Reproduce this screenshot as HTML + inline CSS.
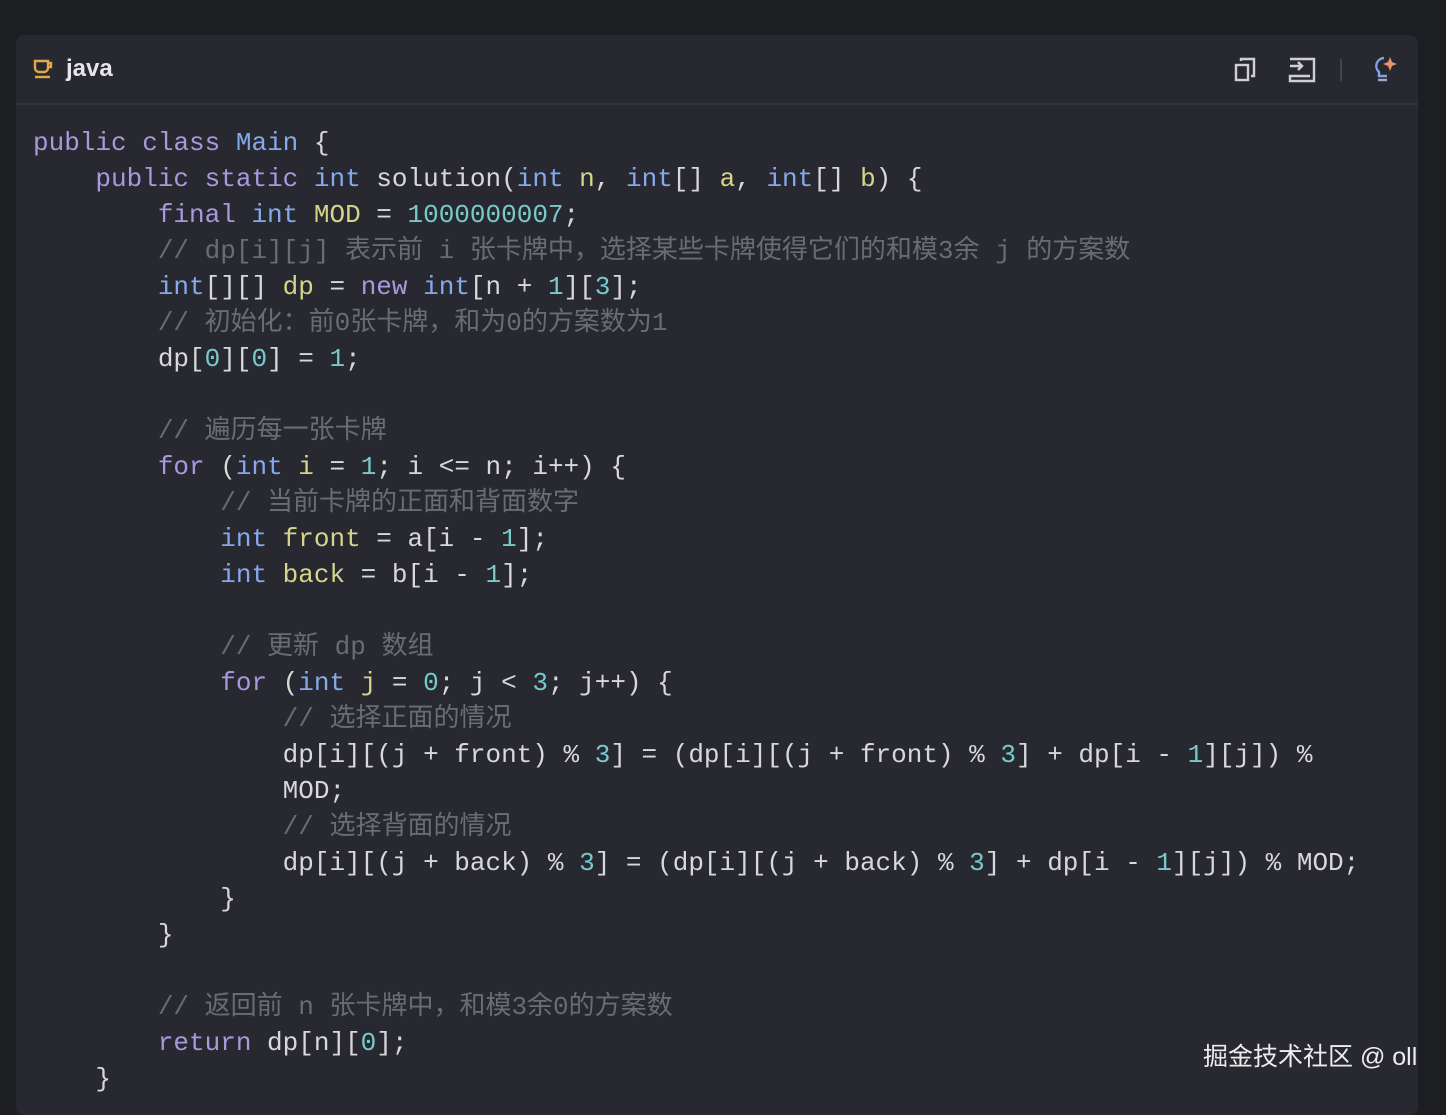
<!DOCTYPE html>
<html><head><meta charset="utf-8"><style>
html,body{margin:0;padding:0;background:#1d1e22;width:1446px;height:1096px;overflow:hidden}
.card{position:absolute;left:16px;top:35px;width:1402px;height:1080px;background:#282930;border-radius:8px}
.hdr{height:68px;border-bottom:2px solid #34353c;position:relative}
.lang{position:absolute;left:50px;top:20px;font:bold 24px "Liberation Sans",sans-serif;color:#e6e6ea}
pre{margin:0;position:absolute;left:33px;top:125px;font:26px/36px "Liberation Mono","Noto Sans CJK SC",monospace;color:#d8d8dc}
.k{color:#a898dc}.t{color:#84a9ec}.y{color:#d5d48a}.n{color:#78c9cc}.c{color:#6a6c73}
.wm{position:absolute;left:1203px;top:1037px;font:25px "Liberation Sans","Noto Sans CJK SC",sans-serif;color:#ececec}
</style></head><body>
<div class="card">
 <div class="hdr">
  <svg style="position:absolute;left:17px;top:23px" width="22" height="22" viewBox="0 0 22 22" fill="none" stroke="#e1a84a" stroke-width="2.4"><path d="M2 3h13v7a4 4 0 0 1-4 4H6a4 4 0 0 1-4-4z"/><path d="M15 5h3v4h-3"/><path d="M2 19h15"/></svg>
  <div class="lang">java</div>
  <svg style="position:absolute;left:1218px;top:22px" width="24" height="26" viewBox="0 0 24 26" fill="none" stroke="#cfcfd4" stroke-width="2.4"><rect x="2" y="8" width="12" height="15"/><path d="M7 4V2h13v17h-3"/></svg>
  <svg style="position:absolute;left:1272px;top:22px" width="28" height="26" viewBox="0 0 28 26" fill="none" stroke="#cfcfd4" stroke-width="2.4"><path d="M2 9h12M10 5l4 4-4 4"/><path d="M2 2h24v22H2v-5h20"/></svg>
  <div style="position:absolute;left:1324px;top:24px;width:2px;height:22px;background:#44454c"></div>
  <svg style="position:absolute;left:1354px;top:19px" width="28" height="30" viewBox="0 0 28 30" fill="none"><path d="M14 4a8 8 0 0 0-5 14v4h8" stroke="#7fa2ea" stroke-width="2.4"/><path d="M8 26h9" stroke="#a4a8c0" stroke-width="2.4"/><path d="M20 3l2 5 5 2-5 2-2 5-2-5-5-2 5-2z" fill="#e8906a"/></svg>
 </div>
</div>
<pre><span class="k">public</span> <span class="k">class</span> <span class="t">Main</span> {
    <span class="k">public</span> <span class="k">static</span> <span class="t">int</span> solution(<span class="t">int</span> <span class="y">n</span>, <span class="t">int</span>[] <span class="y">a</span>, <span class="t">int</span>[] <span class="y">b</span>) {
        <span class="k">final</span> <span class="t">int</span> <span class="y">MOD</span> = <span class="n">1000000007</span>;
        <span class="c">// dp[i][j] 表示前 i 张卡牌中，选择某些卡牌使得它们的和模3余 j 的方案数</span>
        <span class="t">int</span>[][] <span class="y">dp</span> = <span class="k">new</span> <span class="t">int</span>[n + <span class="n">1</span>][<span class="n">3</span>];
        <span class="c">// 初始化：前0张卡牌，和为0的方案数为1</span>
        dp[<span class="n">0</span>][<span class="n">0</span>] = <span class="n">1</span>;

        <span class="c">// 遍历每一张卡牌</span>
        <span class="k">for</span> (<span class="t">int</span> <span class="y">i</span> = <span class="n">1</span>; i &lt;= n; i++) {
            <span class="c">// 当前卡牌的正面和背面数字</span>
            <span class="t">int</span> <span class="y">front</span> = a[i - <span class="n">1</span>];
            <span class="t">int</span> <span class="y">back</span> = b[i - <span class="n">1</span>];

            <span class="c">// 更新 dp 数组</span>
            <span class="k">for</span> (<span class="t">int</span> <span class="y">j</span> = <span class="n">0</span>; j &lt; <span class="n">3</span>; j++) {
                <span class="c">// 选择正面的情况</span>
                dp[i][(j + front) % <span class="n">3</span>] = (dp[i][(j + front) % <span class="n">3</span>] + dp[i - <span class="n">1</span>][j]) %
                MOD;
                <span class="c">// 选择背面的情况</span>
                dp[i][(j + back) % <span class="n">3</span>] = (dp[i][(j + back) % <span class="n">3</span>] + dp[i - <span class="n">1</span>][j]) % MOD;
            }
        }

        <span class="c">// 返回前 n 张卡牌中，和模3余0的方案数</span>
        <span class="k">return</span> dp[n][<span class="n">0</span>];
    }</pre>
<div class="wm">掘金技术社区 @ oll</div>
</body></html>
